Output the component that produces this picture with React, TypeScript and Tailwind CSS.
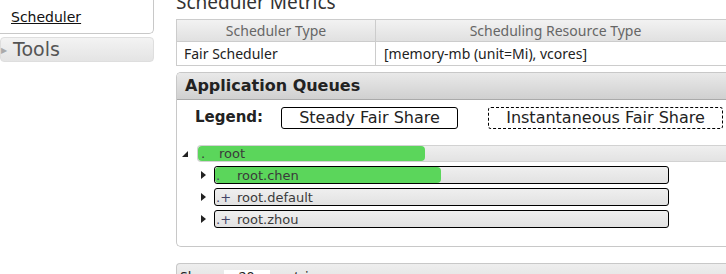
import React from "react";

const verdana = { fontFamily: '"DejaVu Sans", Verdana, sans-serif' };
const segoe = { fontFamily: '"Noto Sans", "Open Sans", sans-serif' };

function Tri({ down }: { down?: boolean }) {
  return down ? (
    <svg width="6" height="6" viewBox="0 0 6 6" className="shrink-0">
      <polygon points="6,0 6,6 0,6" fill="#222" />
    </svg>
  ) : (
    <svg width="5" height="8" viewBox="0 0 5 8" className="shrink-0">
      <polygon points="0,0 5,4 0,8" fill="#222" />
    </svg>
  );
}

function ChildRow({ name, pct }: { name: string; pct: number }) {
  return (
    <div className="flex items-center h-[22px]">
      <div className="w-[27px] flex justify-end pr-[8px]">
        <Tri />
      </div>
      <div className="relative w-[455px] h-[18px] rounded-[3px] border border-black bg-gradient-to-b from-[#efefef] to-[#e2e2e2] overflow-hidden">
        {pct > 0 && (
          <div
            className="absolute left-0 top-0 bottom-0 rounded-[4px] bg-[#5bd65b]"
            style={{ width: `${pct}px` }}
          />
        )}
        <div className="absolute inset-0 flex items-center text-[13px] text-[#3a3a3a] leading-none" style={verdana}>
          <span className="w-[22px] pl-[1px] text-[#446]">{pct > 0 ? "." : ".+"}</span>
          <span>{name}</span>
        </div>
      </div>
    </div>
  );
}

export default function App() {
  return (
    <div className="w-[726px] h-[274px] overflow-hidden bg-white flex" style={segoe}>
      {/* Left nav */}
      <div className="w-[154px] shrink-0 flex flex-col">
        <div className="h-[34px] shrink-0 border border-[#c8c8c8] border-t-0 border-l-0 rounded-br-[5px] pl-[11px] pt-[4px]">
          <a className="text-[14px] text-[#111] underline" style={verdana}>Scheduler</a>
        </div>
        <div className="mt-[3px] h-[25px] shrink-0 rounded-[4px] border border-[#dedede] bg-gradient-to-b from-[#f3f3f3] to-[#e4e4e4] flex items-center">
          <span className="text-[#aaa] text-[8px] w-[12px] pl-0">▶</span>
          <span className="text-[19px] text-[#555] leading-none" style={verdana}>Tools</span>
        </div>
      </div>
      <div className="w-[22px] shrink-0" />
      {/* Right content */}
      <div className="w-[560px] shrink-0 flex flex-col">
        <div className="-mt-[9px] h-[28px] shrink-0 text-[19px] text-[#333] leading-[22px]">Scheduler Metrics</div>
        <table className="w-full shrink-0 border-collapse border border-[#ccc] text-[14px] text-[#222]">
          <thead>
            <tr className="h-[22px] bg-gradient-to-b from-[#f2f2f2] to-[#e0e0e0]">
              <th className="w-[199px] font-normal text-[#666] border border-[#ccc] p-0 leading-none">Scheduler Type</th>
              <th className="font-normal text-[#666] border border-[#ccc] p-0 leading-none">Scheduling Resource Type</th>
            </tr>
          </thead>
          <tbody>
            <tr className="h-[24px]">
              <td className="border border-[#ccc] pl-[7px] py-0 leading-none">Fair Scheduler</td>
              <td className="border border-[#ccc] pl-[8px] py-0 leading-none">[memory-mb (unit=Mi), vcores]</td>
            </tr>
          </tbody>
        </table>
        {/* Application Queues */}
        <div className="mt-[6px] h-[175px] shrink-0 border border-[#c8c8c8] border-r-0 rounded-l-[5px] flex flex-col">
          <div className="h-[27px] shrink-0 rounded-tl-[4px] bg-gradient-to-b from-[#e9e9e9] to-[#d0d0d0] border-b border-[#aaa] flex items-center pl-[8px]">
            <span className="text-[16px] font-bold text-[#222]" style={verdana}>Application Queues</span>
          </div>
          <div className="flex items-center h-[23px] mt-[6px] pl-[18px] shrink-0" style={verdana}>
            <span className="text-[15px] font-bold text-[#222] w-[86px]">Legend:</span>
            <div className="w-[177px] h-[22px] border border-black rounded-[3px] flex items-center justify-center text-[16px] text-[#222]">
              Steady Fair Share
            </div>
            <div className="ml-[30px] w-[235px] h-[22px] border border-dashed border-black rounded-[3px] flex items-center justify-center text-[16px] text-[#222]">
              Instantaneous Fair Share
            </div>
          </div>
          <div className="mt-[16px] flex flex-col shrink-0">
            <div className="flex items-center h-[17px]">
              <div className="w-[20px] flex justify-end pr-[9px]">
                <Tri down />
              </div>
              <div className="relative flex-1 h-[17px] rounded-l-[4px] border border-[#d2d2d2] border-r-0 bg-gradient-to-b from-[#efefef] to-[#e3e3e3]">
                <div className="absolute left-0 top-0 bottom-0 w-[227px] rounded-[4px] bg-[#5bd65b]" />
                <div className="absolute inset-0 flex items-center text-[13px] text-[#3a3a3a] leading-none" style={verdana}>
                  <span className="w-[21px] pl-[3px]">.</span>
                  <span>root</span>
                </div>
              </div>
            </div>
            <div className="mt-[2px] pl-[10px] flex flex-col">
              <ChildRow name="root.chen" pct={226} />
              <ChildRow name="root.default" pct={0} />
              <ChildRow name="root.zhou" pct={0} />
            </div>
          </div>
        </div>
        {/* Bottom panel */}
        <div className="mt-[16px] h-[30px] shrink-0 border border-[#c8c8c8] border-r-0 rounded-tl-[4px] bg-gradient-to-b from-[#eeeeee] to-[#dcdcdc] flex items-start pt-[6px] pl-[3px] text-[14px] text-[#222] leading-none">
          <span>Show</span>
          <span className="ml-[8px] w-[46px] h-[20px] bg-white text-center">20</span>
          <span className="ml-[8px]">entries</span>
        </div>
      </div>
    </div>
  );
}
